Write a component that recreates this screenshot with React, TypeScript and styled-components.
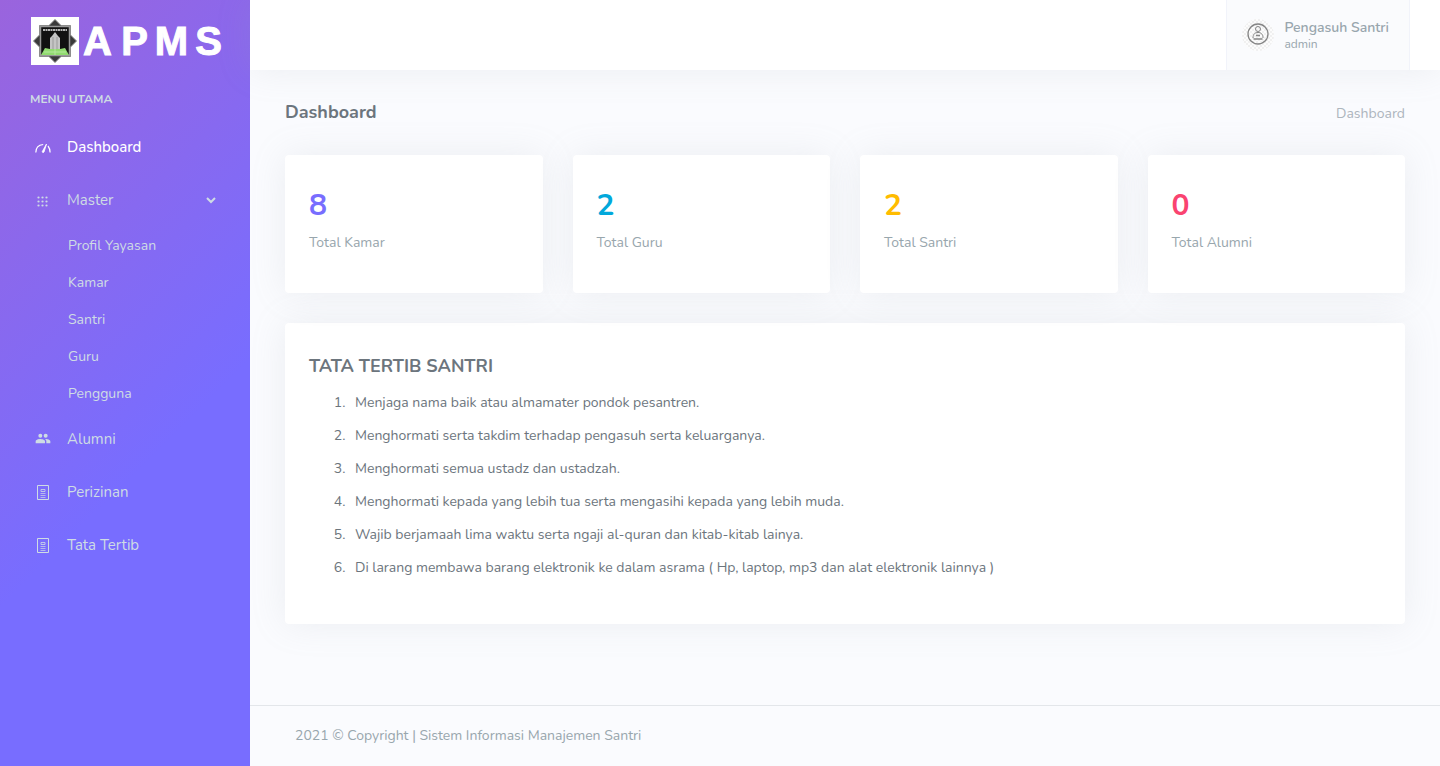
import React from 'react';
import styled, { createGlobalStyle } from 'styled-components';

const GlobalStyle = createGlobalStyle`
  *, *::before, *::after { box-sizing: border-box; }
  body {
    margin: 0;
    background: #fafbfe;
    color: #6c757d;
    font-family: Nunito, Lato, sans-serif;
    font-size: 14px;
    line-height: 22px;
  }
  h1, h2, p, ul, ol { margin: 0; padding: 0; }
  a { color: inherit; text-decoration: none; }
`;

const Shell = styled.div`
  display: flex;
  min-height: 100vh;
`;

const Sidebar = styled.aside`
  flex: 0 0 250px;
  background: linear-gradient(135deg, #9a64dd 0%, #786dff 60%);
  color: #cedce4;
`;

const Brand = styled.a`
  display: flex;
  align-items: center;
  height: 70px;
  padding: 12px 20px 0 31px;
  color: #fff;
`;

const Wordmark = styled.span`
  display: grid;
  grid-template-columns: repeat(4, 37px);
  justify-items: center;
  font-family: 'Liberation Sans Narrow', 'Arial Narrow', 'Liberation Sans', sans-serif;
  font-size: 40px;
  font-weight: 700;
  line-height: 48px;
  -webkit-text-stroke: 1px #fff;
`;

const MenuTitle = styled.p`
  padding: 18px 30px 0;
  font-size: 12px;
  font-weight: 700;
`;

const Menu = styled.ul`
  padding-top: 10px;
  list-style: none;
`;

const MenuLink = styled.a<{ $active?: boolean }>`
  display: grid;
  grid-template-columns: 16px 1fr 12px;
  column-gap: 16px;
  align-items: center;
  height: 53px;
  padding: 0 33px 0 35px;
  font-size: 15px;
  font-weight: ${(p) => (p.$active ? 500 : 400)};
  color: ${(p) => (p.$active ? '#fff' : 'inherit')};
  & > svg:first-child { margin-top: 2px; }
`;

const SubMenu = styled.ul`
  list-style: none;
  padding: 1px 0 0 68px;
`;

const SubLink = styled.a`
  display: block;
  padding: 8px 0 7px;
`;

const Column = styled.div`
  flex: 1;
  min-width: 0;
  display: flex;
  flex-direction: column;
`;

const TopBar = styled.header`
  display: flex;
  justify-content: flex-end;
  height: 70px;
  padding-right: 30px;
  background: #fff;
  box-shadow: 0 0 35px 0 rgba(154, 161, 171, 0.15);
`;

const Profile = styled.button`
  display: flex;
  align-items: center;
  gap: 10px;
  padding: 0 20px 0 15px;
  border: 1px solid #f1f3fa;
  border-width: 0 1px;
  background: #fafbfd;
  color: #98a6ad;
  font: inherit;
  text-align: left;
`;

const ProfileText = styled.span`
  display: flex;
  flex-direction: column;
`;

const ProfileName = styled.strong`
  font-size: 14px;
  font-weight: 600;
  line-height: 17px;
`;

const ProfileRole = styled.span`
  font-size: 12px;
  line-height: 16px;
`;

const Content = styled.main`
  flex: 1;
  padding: 0 35px 30px;
`;

const TitleRow = styled.div`
  display: flex;
  align-items: baseline;
  justify-content: space-between;
  height: 85px;
  padding-top: 31px;
`;

const Title = styled.h1`
  font-size: 18px;
  font-weight: 700;
`;

const Crumb = styled.span`
  color: #adb5bd;
`;

const Cards = styled.div`
  display: grid;
  grid-template-columns: repeat(4, 1fr);
  gap: 30px;
  margin-bottom: 30px;
`;

const Card = styled.section`
  padding: 24px;
  border-radius: 4px;
  background: #fff;
  box-shadow: 0 0 35px 0 rgba(154, 161, 171, 0.15);
`;

const StatCard = styled(Card)`
  height: 138px;
`;

const Figure = styled.p<{ $color: string }>`
  color: ${(p) => p.$color};
  font-size: 30px;
  font-weight: 700;
  line-height: 53px;
`;

const Label = styled.p`
  color: #98a6ad;
`;

const RulesCard = styled(Card)`
  padding-bottom: 37px;
`;

const RulesTitle = styled.h2`
  padding-top: 8px;
  font-size: 18px;
  font-weight: 700;
`;

const Rules = styled.ol`
  padding: 12px 0 0 40px;
`;

const Rule = styled.li`
  padding: 3px 0 8px 6px;
`;

const Footer = styled.footer`
  height: 61px;
  padding: 19px 45px;
  border-top: 1px solid #e3e6ea;
  color: #98a6ad;
`;

const EmblemIcon = () => (
  <svg width="48" height="48" viewBox="0 0 48 48" aria-hidden="true">
    <path fill="#fff" d="M0 0h48v48H0z" />
    <path fill="#3a3a3a" stroke="#888" d="M24 2.500l6 6h9.500V18l6 6-6 6v9.500H30l-6 6-6-6H8.500V30l-6-6 6-6V8.500H18z" />
    <path fill="#111" stroke="#999" strokeWidth="1.500" d="M9.500 9.500h29v29h-29z" />
    <path stroke="#b5b5b5" strokeWidth="2" strokeDasharray="2 .5" d="M12 13h24" />
    <path fill="#c5c5c5" d="M19 32V21l2-2 3-4 3 4 2 2v11z" />
    <path stroke="#9b9b9b" d="M22 20v12M26 20v12" />
    <path fill="#91db70" d="M14 31l5 1h10l5-1 4 7H10z" />
    <path stroke="#b5e89d" d="M24 32v6M13 35h22" />
  </svg>
);

const GaugeIcon = () => (
  <svg width="16" height="16" viewBox="0 0 16 16" fill="none" stroke="currentColor" strokeWidth="1.200" aria-hidden="true">
    <path d="M.8 12.500c0-4.500 2.500-7.500 7.400-8M13 6c1.300 1.600 2 3.500 2.100 6.500" />
    <path fill="currentColor" strokeWidth=".8" d="M11.500 4L9 12c-.4 1-2 .6-1.700-.5z" />
  </svg>
);

const GridIcon = () => (
  <svg width="16" height="16" viewBox="0 0 16 16" fill="currentColor" aria-hidden="true">
    {[3.500, 7.500, 11.500].map((x) =>
      [4.500, 8.500, 12.500].map((y) => <circle key={`${x}-${y}`} cx={x} cy={y} r="1.100" />),
    )}
  </svg>
);

const PeopleIcon = () => (
  <svg width="16" height="16" viewBox="0 0 24 24" fill="currentColor" aria-hidden="true">
    <path d="M16 8.500a3 3 0 1 0 0-6 3 3 0 0 0 0 6zm-8 0a3 3 0 1 0 0-6 3 3 0 0 0 0 6zm0 2c-2.300 0-7 1.200-7 3.500V17h14v-3c0-2.300-4.700-3.500-7-3.500zm8 0l-1 .1c1.200.8 2 2 2 3.400v3h6v-3c0-2.300-4.700-3.500-7-3.500z" />
  </svg>
);

const DocumentIcon = () => (
  <svg width="16" height="16" viewBox="0 0 16 16" fill="none" stroke="currentColor" aria-hidden="true">
    <path d="M2.500 .5h11v14h-11z" />
    <path strokeOpacity=".8" d="M6 4.500h4v2H6z" />
    <path strokeOpacity=".7" d="M5.500 8.500h5M5.500 10.500h5M5.500 12.500h5" />
  </svg>
);

const ChevronIcon = () => (
  <svg width="12" height="12" viewBox="0 0 12 12" fill="none" stroke="currentColor" strokeWidth="2" aria-hidden="true">
    <path d="M2 4l4 4 4-4" />
  </svg>
);

const AvatarIcon = () => (
  <svg width="32" height="32" viewBox="0 0 32 32" fill="none" stroke="#858585" aria-hidden="true">
    <defs>
      <pattern id="checks" width="4" height="4" patternUnits="userSpaceOnUse">
        <path fill="#fcfcfc" stroke="none" d="M0 0h4v4H0z" />
        <path fill="#f0f0f0" stroke="none" d="M0 0h2v2H0zM2 2h2v2H2z" />
      </pattern>
    </defs>
    <circle cx="16" cy="16" r="16" fill="url(#checks)" stroke="none" />
    <circle cx="16" cy="15" r="10" strokeWidth="1.300" />
    <circle cx="16" cy="10" r="2.500" />
    <path d="M11 19c0-4 2-5.500 5-5.500s5 1.500 5 5.500" />
    <path strokeWidth="1.500" d="M14 16.500h4M11.500 20h9" />
  </svg>
);

const masterLinks = ['Profil Yayasan', 'Kamar', 'Santri', 'Guru', 'Pengguna'];

const stats = [
  { value: 8, label: 'Total Kamar', color: '#786dff' },
  { value: 2, label: 'Total Guru', color: '#02a8db' },
  { value: 2, label: 'Total Santri', color: '#ffbc00' },
  { value: 0, label: 'Total Alumni', color: '#fa4370' },
];

const rules = [
  'Menjaga nama baik atau almamater pondok pesantren.',
  'Menghormati serta takdim terhadap pengasuh serta keluarganya.',
  'Menghormati semua ustadz dan ustadzah.',
  'Menghormati kepada yang lebih tua serta mengasihi kepada yang lebih muda.',
  'Wajib berjamaah lima waktu serta ngaji al-quran dan kitab-kitab lainya.',
  'Di larang membawa barang elektronik ke dalam asrama ( Hp, laptop, mp3 dan alat elektronik lainnya )',
];

export default function App() {
  return (
    <>
      <GlobalStyle />
      <Shell>
        <Sidebar>
          <Brand href="#">
            <EmblemIcon />
            <Wordmark>
              <span>A</span>
              <span>P</span>
              <span>M</span>
              <span>S</span>
            </Wordmark>
          </Brand>
          <nav>
            <MenuTitle>MENU UTAMA</MenuTitle>
            <Menu>
              <li><MenuLink href="#" $active><GaugeIcon />Dashboard</MenuLink></li>
              <li>
                <MenuLink href="#"><GridIcon />Master<ChevronIcon /></MenuLink>
                <SubMenu>
                  {masterLinks.map((name) => (
                    <li key={name}><SubLink href="#">{name}</SubLink></li>
                  ))}
                </SubMenu>
              </li>
              <li><MenuLink href="#"><PeopleIcon />Alumni</MenuLink></li>
              <li><MenuLink href="#"><DocumentIcon />Perizinan</MenuLink></li>
              <li><MenuLink href="#"><DocumentIcon />Tata Tertib</MenuLink></li>
            </Menu>
          </nav>
        </Sidebar>
        <Column>
          <TopBar>
            <Profile type="button">
              <AvatarIcon />
              <ProfileText>
                <ProfileName>Pengasuh Santri</ProfileName>
                <ProfileRole>admin</ProfileRole>
              </ProfileText>
            </Profile>
          </TopBar>
          <Content>
            <TitleRow>
              <Title>Dashboard</Title>
              <Crumb>Dashboard</Crumb>
            </TitleRow>
            <Cards>
              {stats.map((s) => (
                <StatCard key={s.label}>
                  <Figure $color={s.color}>{s.value}</Figure>
                  <Label>{s.label}</Label>
                </StatCard>
              ))}
            </Cards>
            <RulesCard>
              <RulesTitle>TATA TERTIB SANTRI</RulesTitle>
              <Rules>
                {rules.map((r) => <Rule key={r}>{r}</Rule>)}
              </Rules>
            </RulesCard>
          </Content>
          <Footer>2021 © Copyright | Sistem Informasi Manajemen Santri</Footer>
        </Column>
      </Shell>
    </>
  );
}
